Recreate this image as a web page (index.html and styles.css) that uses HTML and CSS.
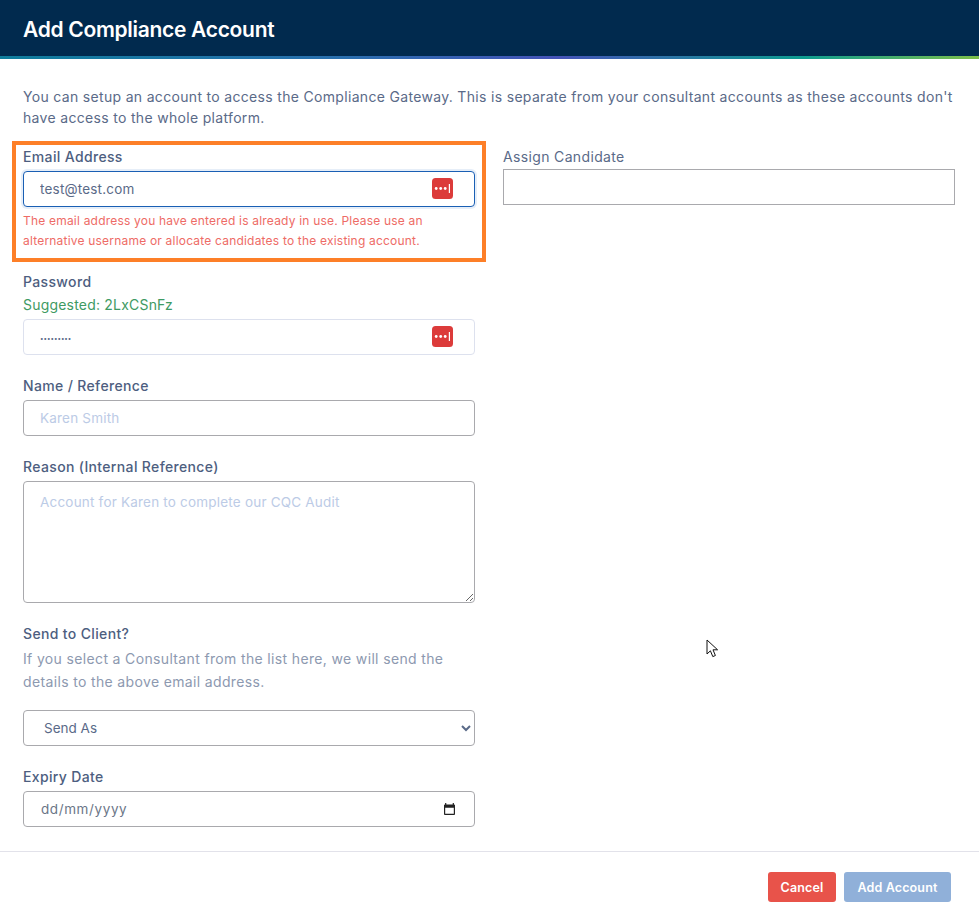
FILE: index.html
```html
<!DOCTYPE html>
<html lang="en">
<head>
    <meta charset="UTF-8">
    <meta name="viewport" content="width=device-width, initial-scale=1.0">
    <title>Add Compliance Account</title>
    <link rel="stylesheet" href="styles.css">
</head>
<body>

    <!-- Header -->
    <header class="modal-header">
        <h1>Add Compliance Account</h1>
    </header>

    <main class="modal-body">
        <p class="intro">You can setup an account to access the Compliance Gateway. This is separate from your consultant accounts as these accounts don't have access to the whole platform.</p>

        <div class="form-grid">
            <div class="form-col">
                <div class="field field-highlighted">
                    <label for="email">Email Address</label>
                    <div class="input-wrap">
                        <input id="email" class="input input-focus" type="text" value="test@test.com">
                        <svg class="key-icon" viewBox="0 0 21 21"><rect width="21" height="21" rx="3.5" fill="#dc3b3a"/><circle cx="4.2" cy="10.5" r="1.4" fill="#fff"/><circle cx="8.7" cy="10.5" r="1.4" fill="#fff"/><circle cx="13.2" cy="10.5" r="1.4" fill="#fff"/><rect x="16.8" y="6" width="1.2" height="9" fill="#fff"/></svg>
                    </div>
                    <p class="error">The email address you have entered is already in use. Please use an alternative username or allocate candidates to the existing account.</p>
                    <div class="highlight-box"></div>
                </div>

                <div class="field">
                    <label for="password">Password</label>
                    <p class="suggested">Suggested: 2LxCSnFz</p>
                    <div class="input-wrap">
                        <input id="password" class="input input-light input-password" type="password" value="testtest1">
                        <svg class="key-icon" viewBox="0 0 21 21"><rect width="21" height="21" rx="3.5" fill="#dc3b3a"/><circle cx="4.2" cy="10.5" r="1.4" fill="#fff"/><circle cx="8.7" cy="10.5" r="1.4" fill="#fff"/><circle cx="13.2" cy="10.5" r="1.4" fill="#fff"/><rect x="16.8" y="6" width="1.2" height="9" fill="#fff"/></svg>
                    </div>
                </div>

                <div class="field">
                    <label for="name">Name / Reference</label>
                    <input id="name" class="input" type="text" placeholder="Karen Smith">
                </div>

                <div class="field">
                    <label for="reason">Reason (Internal Reference)</label>
                    <textarea id="reason" class="input textarea" placeholder="Account for Karen to complete our CQC Audit"></textarea>
                </div>

                <div class="field">
                    <label for="send-as">Send to Client?</label>
                    <p class="help">If you select a Consultant from the list here, we will send the details to the above email address.</p>
                    <select id="send-as" class="input select">
                        <option>Send As</option>
                    </select>
                </div>

                <div class="field">
                    <label for="expiry">Expiry Date</label>
                    <div class="input-wrap">
                        <input id="expiry" class="input date" type="text" value="dd/mm/yyyy" readonly>
                        <svg class="calendar-icon" viewBox="0 0 12 13"><path d="M2.5 0V1.5H9.5V0H10.8V1.5H11A1 1 0 0 1 12 2.5V12A1 1 0 0 1 11 13H1A1 1 0 0 1 0 12V2.5A1 1 0 0 1 1 1.5H1.2V0ZM1.3 5V11.7H10.7V5Z" fill="#222" fill-rule="evenodd"/></svg>
                    </div>
                </div>
            </div>

            <div class="form-col">
                <div class="field">
                    <label class="label-plain" for="candidate">Assign Candidate</label>
                    <input id="candidate" class="input input-square" type="text">
                </div>
            </div>
        </div>
    </main>

    <footer class="modal-footer">
        <button class="btn btn-cancel">Cancel</button>
        <button class="btn btn-add">Add Account</button>
    </footer>

    <!-- Mouse pointer in the capture -->
    <svg class="pointer" viewBox="0 0 14 20"><path d="M1 1V15L4.4 11.8L6.8 17.6L9.4 16.5L7 10.8H11.6Z" fill="#fff" stroke="#111" stroke-width="1"/></svg>

</body>
</html>
```

FILE: styles.css
```css
/* General Styles */
* {
    margin: 0;
    padding: 0;
    box-sizing: border-box;
}

body {
    position: relative;
    font-family: Inter, "Open Sans", Arial, sans-serif;
    font-size: 14px;
    letter-spacing: 0.35px;
    color: #5a6a88;
    background-color: #fff;
}

/* Header */
.modal-header {
    height: 59px;
    padding: 2px 23px 0;
    display: flex;
    align-items: center;
    background-color: #012a4e;
    border-bottom: 3px solid;
    border-image: linear-gradient(90deg, #0f7d9c 0%, #2a6fae 35%, #4553b8 57%, #0e9c90 82%, #7fbf4a 100%) 1;
}

.modal-header h1 {
    font-size: 21px;
    font-weight: 600;
    letter-spacing: -0.3px;
    color: #fff;
}

/* Body */
.modal-body {
    padding: 27px 24px 3px 23px;
}

.intro {
    line-height: 21px;
    letter-spacing: 0.32px;
    margin-bottom: 19px;
}

.form-grid {
    display: grid;
    grid-template-columns: 452px 452px;
    gap: 28px;
}

.field {
    position: relative;
    margin-bottom: 21px;
}

label {
    display: block;
    font-size: 14px;
    line-height: 20px;
    font-weight: 500;
    color: #4d5e80;
    margin-bottom: 4px;
}

.label-plain {
    font-weight: 400;
    color: #5a6a88;
    margin-bottom: 2px;
}

.input {
    display: block;
    width: 100%;
    height: 36px;
    padding: 0 16px;
    font-family: inherit;
    font-size: 13.5px;
    letter-spacing: 0.2px;
    color: #5a6a88;
    background-color: #fff;
    border: 1px solid #a9a9ad;
    border-radius: 4px;
    outline: none;
}

.input::placeholder {
    color: #bccbe6;
}

.input-focus {
    border-color: #1a5fb4;
    box-shadow: 0 0 0 2px #e6eef8;
}

.input-light {
    border-color: #dde1ee;
}

.input-password {
    padding-top: 2px;
    font-size: 6.2px;
    letter-spacing: 0;
}

.input-square {
    border-radius: 0;
}

.textarea {
    height: 122px;
    padding-top: 12px;
}

.select {
    letter-spacing: 0;
}

.date {
    padding-left: 17px;
    letter-spacing: 0.6px;
    color: #6b7688;
}

.input-wrap {
    position: relative;
}

.key-icon {
    position: absolute;
    top: 7px;
    right: 22px;
    width: 21px;
    height: 21px;
}

.calendar-icon {
    position: absolute;
    top: 12px;
    right: 20px;
    width: 11px;
    height: 12px;
}

.error {
    margin-top: 4px;
    font-size: 12px;
    line-height: 20px;
    letter-spacing: 0.2px;
    color: #ee6b66;
}

.suggested {
    line-height: 18px;
    letter-spacing: 0.2px;
    color: #3e9a63;
    margin-bottom: 5px;
}

.help {
    margin-top: -1px;
    line-height: 23px;
    color: #8d99b0;
    margin-bottom: 17px;
}

/* Orange box drawn over the email field in the capture */
.highlight-box {
    position: absolute;
    top: -6px;
    left: -11px;
    right: -11px;
    bottom: -11px;
    border: 4px solid #fd7f28;
    pointer-events: none;
}

/* Footer */
.modal-footer {
    display: flex;
    justify-content: flex-end;
    gap: 8px;
    padding: 20px 28px 18px 0;
    border-top: 1px solid #e2e2ea;
}

.btn {
    height: 30px;
    border: none;
    border-radius: 3px;
    font-family: inherit;
    font-size: 12.5px;
    letter-spacing: 0.15px;
    font-weight: 600;
    color: #fff;
}

.btn-cancel {
    width: 68px;
    background-color: #e8534a;
}

.btn-add {
    width: 107px;
    background-color: #90b0d9;
}

.pointer {
    position: absolute;
    top: 639px;
    left: 706px;
    width: 14px;
    height: 20px;
}
```
